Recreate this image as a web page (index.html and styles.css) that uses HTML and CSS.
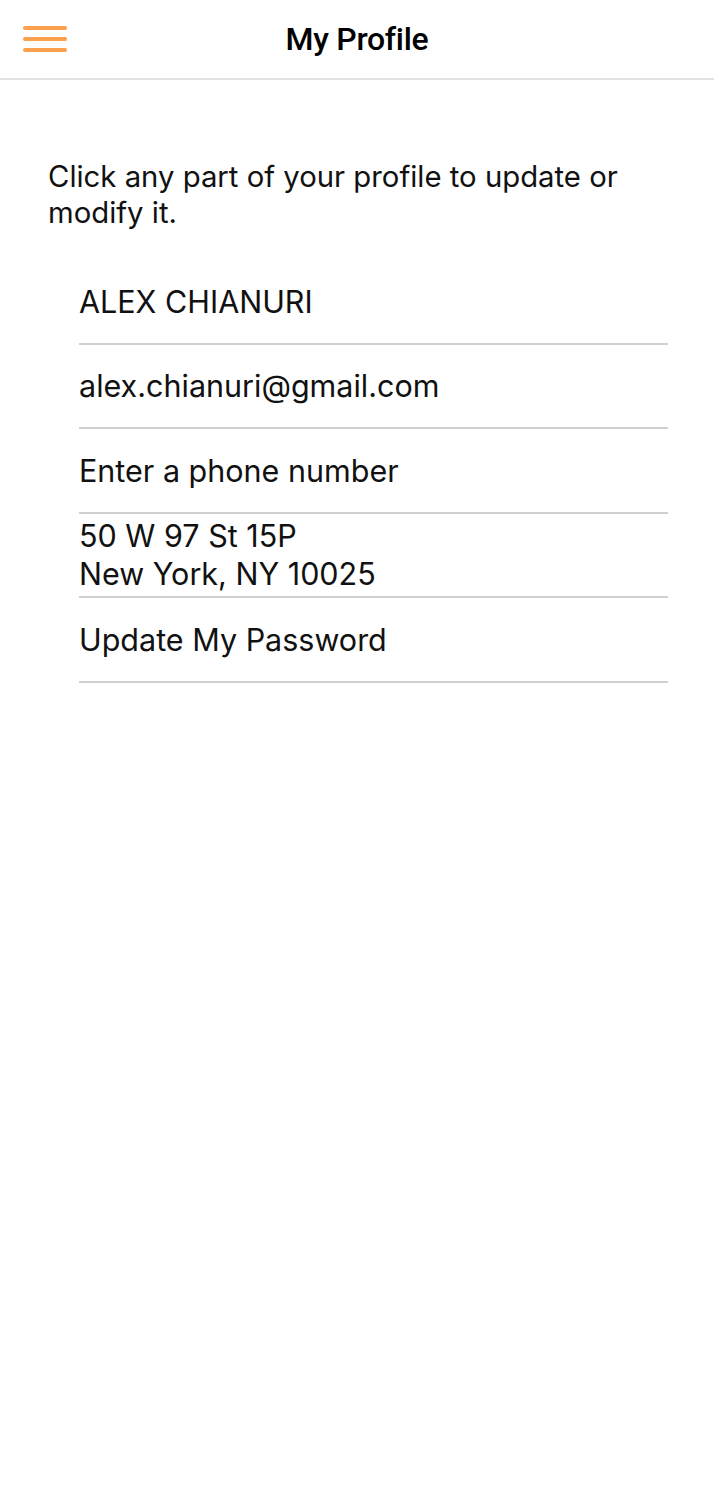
FILE: index.html
```html
<!DOCTYPE html>
<html lang="en">
<head>
  <meta charset="UTF-8">
  <meta name="viewport" content="width=device-width, initial-scale=1.0">
  <title>My Profile</title>
  <link rel="stylesheet" href="styles.css">
</head>
<body>

  <!-- top bar -->
  <header class="topbar">
    <button class="menu-btn" aria-label="Menu">
      <span></span><span></span><span></span>
    </button>
    <h1 class="topbar-title">My Profile</h1>
  </header>

  <main class="profile">
    <p class="profile-hint">Click any part of your profile to update or modify it.</p>

    <ul class="profile-list">
      <li class="profile-row">ALEX CHIANURI</li>
      <li class="profile-row">alex.chianuri@gmail.com</li>
      <li class="profile-row">Enter a phone number</li>
      <li class="profile-row address">
        <span>50 W 97 St 15P</span>
        <span>New York, NY 10025</span>
      </li>
      <li class="profile-row">Update My Password</li>
    </ul>
  </main>

</body>
</html>
```

FILE: styles.css
```css
/* base */
body {
  margin: 0;
  font-family: Inter, "Liberation Sans", Arial, sans-serif;
  background-color: #fff;
  color: #111;
}

/* top bar */
.topbar {
  position: relative;
  height: 78px;
  display: flex;
  align-items: center;
  justify-content: center;
  border-bottom: 2px solid #e2e2e2;
}

.topbar-title {
  margin: 0;
  font-family: Roboto, "Liberation Sans", sans-serif;
  font-size: 32px;
  font-weight: 500;
  letter-spacing: -0.3px;
  color: #000;
}

.menu-btn {
  position: absolute;
  left: 23px;
  top: 26px;
  width: 44px;
  height: 26px;
  padding: 0;
  border: none;
  background: none;
  display: flex;
  flex-direction: column;
  justify-content: space-between;
  cursor: pointer;
}

.menu-btn span {
  display: block;
  height: 4px;
  border-radius: 2px;
  background-color: #fba04c;
}

/* profile content */
.profile {
  padding: 0 46px 0 48px;
}

.profile-hint {
  margin: 79px 0 29px;
  font-size: 29.3px;
  line-height: 36px;
}

.profile-list {
  list-style: none;
  margin: 0 0 0 31px;
  padding: 0;
}

.profile-row {
  height: 82.5px;
  display: flex;
  align-items: center;
  border-bottom: 2px solid #cfcfd3;
  font-size: 30.5px;
  cursor: pointer;
}

.profile-row.address {
  flex-direction: column;
  align-items: flex-start;
  justify-content: center;
  line-height: 38px;
}
```
